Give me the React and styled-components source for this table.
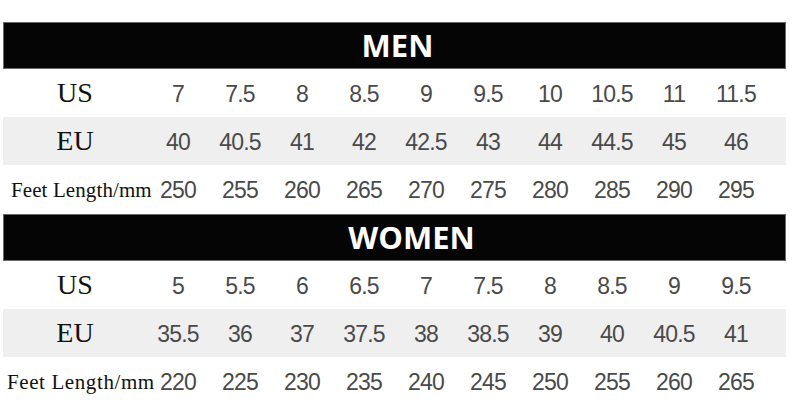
import React from "react";
import styled, { createGlobalStyle } from "styled-components";

const GlobalStyle = createGlobalStyle`
  html, body {
    margin: 0;
    padding: 0;
    background: #ffffff;
  }
`;

const Page = styled.div`
  width: 800px;
  height: 410px;
  overflow: hidden;
  padding: 22px 14px 0 3px;
  box-sizing: border-box;
  display: grid;
  gap: 1px;
  align-content: start;
`;

const Section = styled.div`
  display: grid;
`;

const Header = styled.div`
  height: 47px;
  box-sizing: border-box;
  background: #050505;
  border: 1px solid #6a6a6a;
  display: flex;
  align-items: center;
  justify-content: center;
  padding-left: ${({ shift }) => shift || "0"};
  color: #ffffff;
  font-family: "Open Sans", "Noto Sans", sans-serif;
  font-weight: 700;
  font-size: 31px;
  line-height: 1;
`;

const Row = styled.div`
  height: 48px;
  display: grid;
  grid-template-columns: 144px repeat(10, 62px);
  align-items: center;
  background: ${({ shaded }) => (shaded ? "#efefef" : "transparent")};
`;

const Label = styled.div`
  text-align: center;
  font-family: "Liberation Serif", "Times New Roman", serif;
  color: #111111;
  font-size: 28px;
  white-space: nowrap;
`;

const LengthLabel = styled.div`
  text-align: left;
  font-family: "Liberation Serif", "Times New Roman", serif;
  color: #111111;
  font-size: 21px;
  letter-spacing: ${({ spacing }) => spacing || "0"};
  padding-left: ${({ indent }) => indent || "0"};
  padding-top: 2px;
  white-space: nowrap;
`;

const Cell = styled.div`
  text-align: center;
  font-family: "Liberation Sans", Arial, sans-serif;
  font-size: 23px;
  letter-spacing: -0.8px;
  color: #4a4a4a;
  padding-top: 2px;
`;

const charts = [
  {
    title: "MEN",
    shift: "6px",
    spacing: "0.1px",
    indent: "8px",
    rows: [
      ["US", ["7", "7.5", "8", "8.5", "9", "9.5", "10", "10.5", "11", "11.5"]],
      ["EU", ["40", "40.5", "41", "42", "42.5", "43", "44", "44.5", "45", "46"]],
      ["Feet Length/mm", ["250", "255", "260", "265", "270", "275", "280", "285", "290", "295"]],
    ],
  },
  {
    title: "WOMEN",
    shift: "34px",
    spacing: "0.6px",
    indent: "4px",
    rows: [
      ["US", ["5", "5.5", "6", "6.5", "7", "7.5", "8", "8.5", "9", "9.5"]],
      ["EU", ["35.5", "36", "37", "37.5", "38", "38.5", "39", "40", "40.5", "41"]],
      ["Feet Length/mm", ["220", "225", "230", "235", "240", "245", "250", "255", "260", "265"]],
    ],
  },
];

const App = () => {
  return (
    <>
      <GlobalStyle />
      <Page>
        {charts.map((chart) => (
          <Section key={chart.title}>
            <Header shift={chart.shift}>{chart.title}</Header>
            {chart.rows.map(([label, values], i) => (
              <Row key={label} shaded={i === 1}>
                {i === 2 ? (
                  <LengthLabel spacing={chart.spacing} indent={chart.indent}>
                    {label}
                  </LengthLabel>
                ) : (
                  <Label>{label}</Label>
                )}
                {values.map((v, j) => (
                  <Cell key={j}>{v}</Cell>
                ))}
              </Row>
            ))}
          </Section>
        ))}
      </Page>
    </>
  );
};

export default App;
